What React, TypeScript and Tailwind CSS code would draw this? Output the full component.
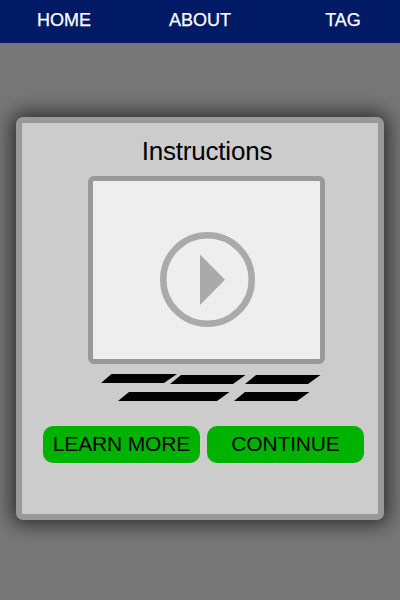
function NavItem({ label, className }: { label: string; className: string }) {
  return <a className={`shrink-0 text-center whitespace-nowrap ${className}`}>{label}</a>;
}

function ActionButton({ label, className }: { label: string; className: string }) {
  return (
    <button
      className={`flex h-[37px] w-[157px] items-center justify-center rounded-[10px] bg-[#00b200] pb-[2px] text-[21px] leading-none tracking-[-0.15px] whitespace-nowrap text-black ${className}`}
    >
      {label}
    </button>
  );
}

export default function App() {
  return (
    <div className="flex h-[600px] w-[400px] flex-col overflow-hidden bg-[#777777] font-['Liberation_Sans',Arial,sans-serif]">
      <nav className="flex h-[43px] shrink-0 items-start bg-[#001a66] pt-[10px] text-[18px] leading-[21px] text-white [-webkit-text-stroke:0.25px_white]">
        <NavItem label="HOME" className="w-32" />
        <NavItem label="ABOUT" className="w-36" />
        <NavItem label="TAG" className="w-[142px]" />
      </nav>

      <main className="mx-4 mt-[74px] flex h-[403px] flex-col rounded-[7px] border-[6px] border-[#999999] bg-[#cccccc] shadow-[0_0_20px_4px_rgba(0,0,0,0.65)]">
        <h1 className="mt-[13px] h-10 pl-[14px] text-center text-[26px] leading-[30px] tracking-[-0.2px] text-black">
          Instructions
        </h1>

        <div className="ml-[66px] flex h-[188px] w-[237px] shrink-0 rounded-[6px] border-[5px] border-[#999999] bg-[#eeeeee] pt-[51px] pl-[67px]">
          <svg width="95" height="95" viewBox="0 0 95 95" className="shrink-0">
            <circle cx="47.5" cy="47.5" r="44.25" fill="none" stroke="#aaaaaa" strokeWidth="6.5" />
            <path d="M40 22.5L65 47.75L40 73Z" fill="#aaaaaa" />
          </svg>
        </div>

        <svg width="220" height="30" viewBox="101 373 220 30" className="mt-[9px] ml-[79px] shrink-0">
          <path d="M101 383L111.5 374H177L164 383Z" />
          <path d="M170 384L181 375H245.5L233 384Z" />
          <path d="M245 384L256 375H320.5L308 384Z" />
          <path d="M118 401L129 392H229.5L217 401Z" />
          <path d="M234 401L245 392H309.5L297 401Z" />
        </svg>

        <div className="mt-[23px] ml-[21px] flex gap-[7px]">
          <ActionButton label="LEARN MORE" className="" />
          <ActionButton label="CONTINUE" className="" />
        </div>
      </main>
    </div>
  );
}
